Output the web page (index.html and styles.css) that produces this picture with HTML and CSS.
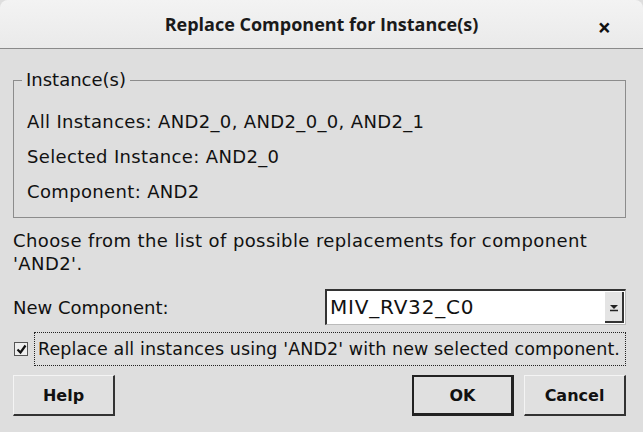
FILE: index.html
```html
<!DOCTYPE html>
<html>
<head>
<meta charset="utf-8">
<link rel="stylesheet" href="styles.css">
</head>
<body>
<div class="dialog">
  <div class="titlebar">
    <span class="title">Replace Component for Instance(s)</span>
    <span class="close">×</span>
  </div>
  <div class="content">
    <fieldset class="group">
      <legend>Instance(s)</legend>
      <div class="row">All Instances: AND2_0, AND2_0_0, AND2_1</div>
      <div class="row">Selected Instance: AND2_0</div>
      <div class="row">Component: AND2</div>
    </fieldset>
    <p class="desc">Choose from the list of possible replacements for component<br>'AND2'.</p>
    <div class="field">
      <span class="label">New Component:</span>
      <div class="combo">
        <span class="combo-text">MIV_RV32_C0</span>
        <span class="combo-btn">
          <svg width="10" height="10" viewBox="0 0 10 10"><path d="M1 3h8L5 7z" fill="#222"/><path d="M1 8.5h8" stroke="#222" stroke-width="1.5"/></svg>
        </span>
      </div>
    </div>
    <div class="check-row">
      <span class="checkbox">
        <svg width="11" height="11" viewBox="0 0 11 11"><path d="M1.5 5.5l3 3 5-7" fill="none" stroke="#111" stroke-width="2.2"/></svg>
      </span>
      <span class="check-label">Replace all instances using 'AND2' with new selected component.</span>
    </div>
    <div class="buttons">
      <button class="btn">Help</button>
      <span class="spacer"></span>
      <button class="btn default">OK</button>
      <button class="btn">Cancel</button>
    </div>
  </div>
</div>
</body>
</html>
```
FILE: styles.css
```css
html, body {
  margin: 0;
  padding: 0;
}
body {
  width: 643px;
  height: 432px;
  overflow: hidden;
  background: #dedede;
  font-family: "DejaVu Sans", "Noto Sans", sans-serif;
  font-size: 18px;
  color: #111;
}
.dialog {
  width: 643px;
  height: 432px;
  display: flex;
  flex-direction: column;
}
.titlebar {
  height: 48px;
  flex: none;
  background: linear-gradient(#f3f3f3, #eaeaea);
  border-bottom: 1px solid #8a8a8a;
  border-radius: 8px 8px 0 0;
  display: flex;
  align-items: center;
  justify-content: center;
  position: relative;
}
.title {
  font-family: "Open Sans", "Noto Sans", sans-serif;
  font-weight: bold;
  font-size: 18px;
  color: #1a1a1a;
}
.close {
  position: absolute;
  right: 32px;
  top: 11px;
  font-family: "Open Sans", sans-serif;
  font-weight: bold;
  font-size: 23px;
}
.content {
  padding: 20px 17px 0 13px;
  display: flex;
  flex-direction: column;
}
.group {
  margin: 0;
  border: 1px solid #8c8c8c;
  padding: 13px 0 8px 13px;
}
.group legend {
  padding: 0 4px;
  margin-left: -5px;
  line-height: 22px;
}
.row {
  line-height: 35px;
  letter-spacing: 0.35px;
}
.desc {
  margin: 11px 0 0 0;
  line-height: 23px;
  letter-spacing: 0.4px;
}
.field {
  display: flex;
  align-items: center;
  margin-top: 14px;
}
.label {
  width: 312px;
}
.combo {
  flex: 1;
  height: 36px;
  box-sizing: border-box;
  background: #fff;
  border-top: 2px solid #333;
  border-left: 2px solid #333;
  border-right: 1px solid #bbb;
  border-bottom: 1px solid #bbb;
  display: flex;
  align-items: stretch;
}
.combo-text {
  flex: 1;
  padding-left: 3px;
  line-height: 33px;
  font-size: 20px;
  letter-spacing: 0.8px;
}
.combo-btn {
  width: 17px;
  margin: 1px 1px 1px 0;
  background: #e4e4e4;
  border-right: 2px solid #333;
  border-bottom: 2px solid #333;
  display: flex;
  align-items: center;
  justify-content: center;
}
.check-row {
  display: flex;
  align-items: center;
  margin-top: 7px;
}
.checkbox {
  width: 12px;
  height: 12px;
  border: 1px solid #555;
  background: #eee;
  display: flex;
  align-items: center;
  justify-content: center;
  margin: 0 6px 0 1px;
}
.check-label {
  flex: 1;
  border: 1px dotted #222;
  padding: 3px 3px;
  line-height: 26px;
  font-size: 17.5px;
  letter-spacing: 0.1px;
  white-space: nowrap;
}
.buttons {
  display: flex;
  margin-top: 9px;
  gap: 10px;
}
.spacer {
  flex: 1;
}
.btn {
  width: 102px;
  height: 41px;
  font-family: inherit;
  font-size: 16px;
  font-weight: bold;
  color: #111;
  background: #e0e0e0;
  border-top: 1px solid #f4f4f4;
  border-left: 1px solid #f4f4f4;
  border-right: 2px solid #333;
  border-bottom: 2px solid #333;
  padding: 0;
}
.btn.default {
  border: 2px solid #222;
  border-right-width: 3px;
  border-bottom-width: 3px;
}
```
